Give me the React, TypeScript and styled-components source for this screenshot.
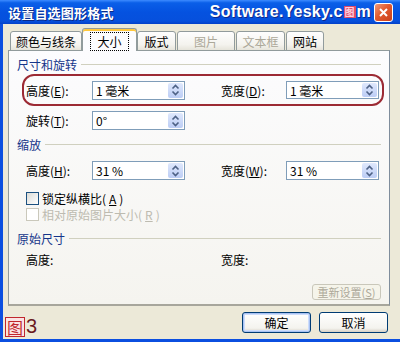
import React from "react";
import styled, { createGlobalStyle } from "styled-components";

const Global = createGlobalStyle`
  html, body { margin: 0; padding: 0; }
  body { width: 400px; height: 342px; overflow: hidden; font-family: "Noto Sans CJK SC", "Liberation Sans", sans-serif; }
`;

const Window = styled.div`
  width: 400px;
  height: 342px;
  box-sizing: border-box;
  display: flex;
  flex-direction: column;
  background: #0b4fe0;
  padding: 0 0 3px 3px;
`;

const TitleBar = styled.div`
  height: 25px;
  margin: 0 0 0 -3px;
  display: flex;
  align-items: center;
  padding: 0 7px 0 8px;
  background: linear-gradient(#3d8bff 0%, #0a5fe8 12%, #0552e0 50%, #0650dc 88%, #0340c8 100%);
  color: #fff;
`;

const TitleText = styled.div`
  font-size: 13px;
  font-weight: bold;
  letter-spacing: 0.2px;
  text-shadow: 1px 1px 0 #0a2a86;
  flex: 1;
`;

const Watermark = styled.div`
  display: flex;
  align-items: center;
  font-family: "Liberation Sans", Arial, sans-serif;
  font-weight: bold;
  font-size: 16px;
  letter-spacing: 0.2px;
  color: #fff;
  text-shadow: 1px 1px 0 #10288a;
  margin-right: 3px;
`;

const Seal = styled.span`
  display: inline-flex;
  align-items: center;
  justify-content: center;
  width: 12px;
  height: 12px;
  margin: 0 1px 0 1px;
  background: #e04a6a;
  color: #ffd0dc;
  font-size: 10px;
  line-height: 1;
  text-shadow: none;
  font-family: "Noto Sans CJK SC", sans-serif;
`;

const CloseBtn = styled.div`
  width: 19px;
  height: 19px;
  box-sizing: border-box;
  border: 1px solid #fff;
  border-radius: 3px;
  background: linear-gradient(135deg, #f09a7a, #e25a2e 45%, #c9401c);
  display: flex;
  align-items: center;
  justify-content: center;
`;

const Body = styled.div`
  flex: 1;
  background: #ece9d8;
  display: flex;
  flex-direction: column;
  padding: 5px 10px 0 5px;
`;

const TabStrip = styled.div`
  height: 22px;
  display: flex;
  align-items: flex-end;
  padding-left: 2px;
  gap: 1px;
  position: relative;
  z-index: 1;
  margin-bottom: -1px;
`;

const Tab = styled.div<{ $w: number; $active?: boolean; $disabled?: boolean }>`
  width: ${(p) => p.$w}px;
  box-sizing: border-box;
  height: ${(p) => (p.$active ? 23 : 20)}px;
  display: flex;
  align-items: center;
  justify-content: center;
  font-size: 12px;
  color: ${(p) => (p.$disabled ? "#aca899" : "#000")};
  border: 1px solid #919b9c;
  border-bottom: ${(p) => (p.$active ? "none" : "1px solid #919b9c")};
  border-radius: 3px 3px 0 0;
  background: ${(p) => (p.$active ? "#fcfcfe" : "linear-gradient(#fefefe, #f4f3ee 70%, #e6e4da)")};
  box-shadow: ${(p) => (p.$active ? "inset 0 2px 0 #ffc83c" : "none")};
  padding-top: ${(p) => (p.$active ? 2 : 0)}px;
  margin-left: ${(p) => (p.$active ? -1 : 0)}px;
  margin-right: ${(p) => (p.$active ? -1 : 0)}px;
`;

const FocusRing = styled.span`
  outline: 1px dotted #000;
  padding: 0 6px;
  line-height: 17px;
`;

const Panel = styled.div`
  height: 256px;
  box-sizing: border-box;
  border: 1px solid #919b9c;
  border-right-color: #7f8d9c;
  border-bottom: 2px solid #a7a69c;
  background: linear-gradient(#fcfcfe, #f5f4ef);
  display: flex;
  flex-direction: column;
  padding: 0 8px 0 8px;
`;

const Heading = styled.div<{ $mt: number }>`
  margin-top: ${(p) => p.$mt}px;
  height: 14px;
  display: flex;
  align-items: center;
  gap: 4px;
  font-size: 12px;
  color: #15358a;
  &::after {
    content: "";
    flex: 1;
    height: 1px;
    background: #d0d0bf;
  }
`;

const Highlight = styled.div`
  margin: 3px 0 0 5px;
  width: 362px;
  height: 32px;
  box-sizing: border-box;
  border: 2px solid #9c2a34;
  border-radius: 12px;
  display: flex;
  align-items: center;
  padding-left: 2px;
`;

const Row = styled.div<{ $mt: number }>`
  margin-top: ${(p) => p.$mt}px;
  margin-left: 9px;
  display: grid;
  grid-template-columns: 66px 93px 36px 65px 93px;
  align-items: center;
  font-size: 12px;
  color: #000;
`;

const InnerRow = styled(Row)`
  margin: 0;
`;

const Label = styled.span`
  white-space: nowrap;
`;

const Field = styled.div<{ $h?: number }>`
  height: ${(p) => p.$h ?? 19}px;
  box-sizing: border-box;
  border: 1px solid #7f9db9;
  background: #fff;
  display: flex;
  align-items: center;
  padding-left: 3px;
  font-size: 12px;
`;

const Value = styled.span`
  flex: 1;
  white-space: pre;
`;

const Spinner = styled.div`
  width: 15px;
  align-self: stretch;
  margin: 1px;
  border-radius: 2px;
  background: linear-gradient(#dfe8fc, #bccdf5);
  display: flex;
  align-items: center;
  justify-content: center;
`;

const CheckRow = styled.div<{ $mt: number; $disabled?: boolean }>`
  margin: ${(p) => p.$mt}px 0 0 9px;
  height: 14px;
  display: flex;
  align-items: center;
  gap: 3px;
  font-size: 12px;
  color: ${(p) => (p.$disabled ? "#bdbbb0" : "#000")};
`;

const Box = styled.span<{ $disabled?: boolean }>`
  width: 13px;
  height: 13px;
  box-sizing: border-box;
  border: 1px solid ${(p) => (p.$disabled ? "#cac8bb" : "#1c5180")};
  background: ${(p) => (p.$disabled ? "#fff" : "linear-gradient(135deg, #dcdcd7, #fff)")};
`;

const ResetRow = styled.div`
  margin-top: 16px;
  display: flex;
  justify-content: flex-end;
`;

const ResetButton = styled.div`
  width: 69px;
  height: 16px;
  box-sizing: border-box;
  border: 1px solid #c9c7ba;
  border-radius: 3px;
  background: #f5f4ea;
  color: #aca899;
  font-size: 11px;
  display: flex;
  align-items: center;
  justify-content: center;
`;

const Footer = styled.div`
  flex: 1;
  display: flex;
  align-items: center;
  padding-bottom: 1px;
`;

const Caption = styled.div`
  display: flex;
  align-items: center;
  margin-left: -3px;
  margin-top: 9px;
  font-family: "Liberation Sans", sans-serif;
  font-size: 20px;
  color: #6a1a1e;
  gap: 1px;
`;

const CaptionSeal = styled.span`
  font-family: "Noto Sans CJK SC", sans-serif;
  font-size: 16px;
  line-height: 18px;
  color: #c0272d;
  background: #fbe3e3;
  border: 1px solid #c0272d;
  padding: 0 1px;
`;

const Buttons = styled.div`
  margin-left: auto;
  display: flex;
  gap: 8px;
  margin-right: 2px;
`;

const Button = styled.div<{ $default?: boolean }>`
  width: 69px;
  height: 21px;
  box-sizing: border-box;
  border: 1px solid #003c74;
  border-radius: 3px;
  background: linear-gradient(#fff, #f4f3ee 80%, #d6d0c5);
  box-shadow: ${(p) => (p.$default ? "inset 0 0 0 1px #a8c2f3, inset 0 0 0 2px #cddcfb" : "none")};
  font-size: 12px;
  display: flex;
  align-items: center;
  justify-content: center;
`;

const Arrows = () => (
  <svg width="9" height="12" viewBox="0 0 9 12">
    <path d="M1.5 4.5 L4.5 1.5 L7.5 4.5" fill="none" stroke="#4d6185" strokeWidth="1.6" />
    <path d="M1.5 7.5 L4.5 10.5 L7.5 7.5" fill="none" stroke="#4d6185" strokeWidth="1.6" />
  </svg>
);

const Input = ({ value, h }: { value: string; h?: number }) => (
  <Field $h={h}>
    <Value>{value}</Value>
    <Spinner>
      <Arrows />
    </Spinner>
  </Field>
);

const tabs = [
  { t: "颜色与线条", w: 72 },
  { t: "大小", w: 55, active: true },
  { t: "版式", w: 39 },
  { t: "图片", w: 58, disabled: true },
  { t: "文本框", w: 49, disabled: true },
  { t: "网站", w: 38 },
];

export default function App() {
  return (
    <>
      <Global />
      <Window>
        <TitleBar>
          <TitleText>设置自选图形格式</TitleText>
          <Watermark>
            Software.Yesky.c<Seal>图</Seal>m
          </Watermark>
          <CloseBtn>
            <svg width="11" height="11" viewBox="0 0 11 11">
              <path d="M2 2 L9 9 M9 2 L2 9" stroke="#fff" strokeWidth="2" />
            </svg>
          </CloseBtn>
        </TitleBar>
        <Body>
          <TabStrip>
            {tabs.map((tab) => (
              <Tab key={tab.t} $w={tab.w} $active={tab.active} $disabled={tab.disabled}>
                {tab.active ? <FocusRing>{tab.t}</FocusRing> : tab.t}
              </Tab>
            ))}
          </TabStrip>
          <Panel>
            <Heading $mt={6}>尺寸和旋转</Heading>
            <Highlight>
              <InnerRow $mt={0}>
                <Label>高度(<u>E</u>):</Label>
                <Input value="1 毫米" />
                <span />
                <Label>宽度(<u>D</u>):</Label>
                <Input value="1 毫米" h={18} />
              </InnerRow>
            </Highlight>
            <Row $mt={5}>
              <Label>旋转(<u>T</u>):</Label>
              <Input value="0°" />
            </Row>
            <Heading $mt={7}>缩放</Heading>
            <Row $mt={10}>
              <Label>高度(<u>H</u>):</Label>
              <Input value="31 %" />
              <span />
              <Label>宽度(<u>W</u>):</Label>
              <Input value="31 %" />
            </Row>
            <CheckRow $mt={11}>
              <Box />
              锁定纵横比(<u>A</u>)
            </CheckRow>
            <CheckRow $mt={2} $disabled>
              <Box $disabled />
              相对原始图片大小(<u>R</u>)
            </CheckRow>
            <Heading $mt={10}>原始尺寸</Heading>
            <Row $mt={6}>
              <Label>高度:</Label>
              <span />
              <span />
              <Label>宽度:</Label>
            </Row>
            <ResetRow>
              <ResetButton>重新设置(<u>S</u>)</ResetButton>
            </ResetRow>
          </Panel>
          <Footer>
            <Caption>
              <CaptionSeal>图</CaptionSeal>3
            </Caption>
            <Buttons>
              <Button $default>确定</Button>
              <Button>取消</Button>
            </Buttons>
          </Footer>
        </Body>
      </Window>
    </>
  );
}
